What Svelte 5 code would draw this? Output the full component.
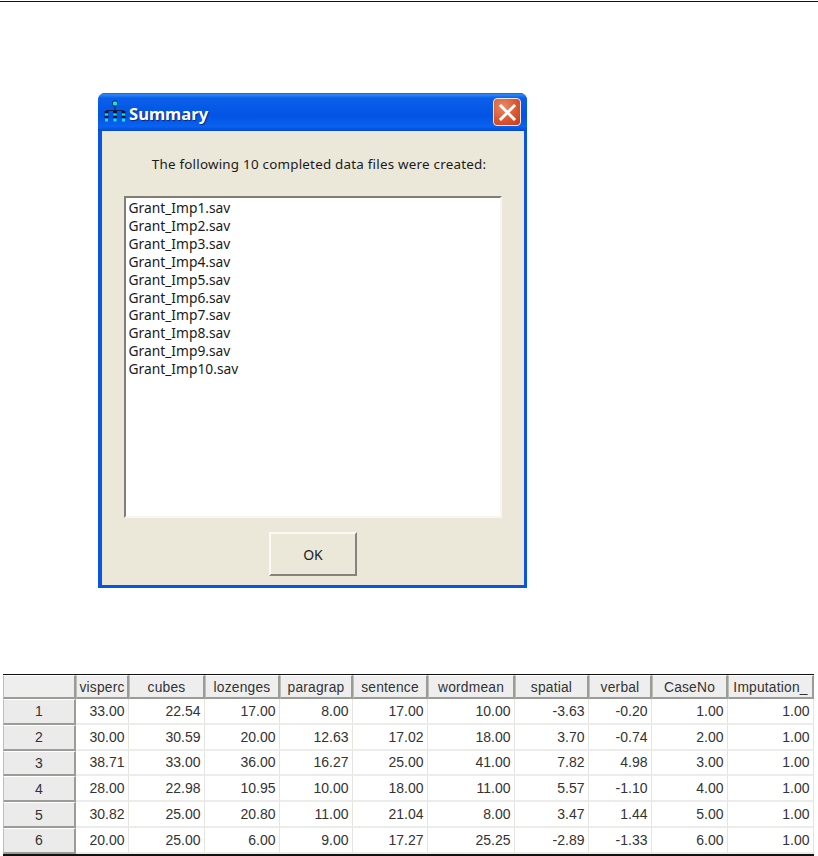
<script>
  const files = [1,2,3,4,5,6,7,8,9,10].map((n) => `Grant_Imp${n}.sav`);
  const columns = ['visperc','cubes','lozenges','paragrap','sentence','wordmean','spatial','verbal','CaseNo','Imputation_'];
  const rows = [
    ['33.00','22.54','17.00','8.00','17.00','10.00','-3.63','-0.20','1.00','1.00'],
    ['30.00','30.59','20.00','12.63','17.02','18.00','3.70','-0.74','2.00','1.00'],
    ['38.71','33.00','36.00','16.27','25.00','41.00','7.82','4.98','3.00','1.00'],
    ['28.00','22.98','10.95','10.00','18.00','11.00','5.57','-1.10','4.00','1.00'],
    ['30.82','25.00','20.80','11.00','21.04','8.00','3.47','1.44','5.00','1.00'],
    ['20.00','25.00','6.00','9.00','17.27','25.25','-2.89','-1.33','6.00','1.00']
  ];
</script>

<div class="page">
  <div class="rule"></div>

  <div class="dialog">
    <div class="titlebar">
      <svg class="appicon" width="24" height="22" viewBox="0 0 24 22">
        <path d="M3.5 10.5h17M3.5 10.5v10M12 6v14.5M20.5 10.5v10" stroke="#10204a" stroke-width="1" fill="none"/>
        <rect x="9.5" y="1" width="5" height="5" rx="1.5" fill="#19e0e0" stroke="#0a2a50"/>
        <path d="M1.5 11h4v2h-4zM10 11h4v2h-4zM18.5 11h4v2h-4z" fill="#08182e"/>
        <path d="M2 13.5h3v2h-3zM10.500 13.500h3v2h-3zM19 13.500h3v2h-3z" fill="#19e0e0"/>
        <path d="M1.500 16h4v2h-4zM10 16h4v2h-4zM18.500 16h4v2h-4z" fill="#08182e"/>
        <path d="M2 18.500h3v3h-3zM10.500 18.500h3v3h-3zM19 18.500h3v3h-3z" fill="#19e0e0"/>
      </svg>
      <span class="title">Summary</span>
      <button class="close" aria-label="Close">
        <svg width="25" height="25" viewBox="0 0 25 25">
          <path d="M6 6l13 13M19 6L6 19" stroke="#fff" stroke-width="3" stroke-linecap="square"/>
        </svg>
      </button>
    </div>
    <div class="body">
      <p class="message">The following 10 completed data files were created:</p>
      <div class="list">
        {#each files as f}
          <div>{f}</div>
        {/each}
      </div>
      <button class="ok">OK</button>
    </div>
  </div>

  <div class="grid">
    <div class="corner"></div>
    {#each columns as c}
      <div class="head">{c}</div>
    {/each}
    {#each rows as r, i}
      <div class="rowhead">{i + 1}</div>
      {#each r as v}
        <div class="cell">{v}</div>
      {/each}
    {/each}
  </div>
</div>

<style>
  :global(body) {
    margin: 0;
    background: #fff;
  }
  .page {
    width: 818px;
    height: 856px;
    overflow: hidden;
    padding-top: 1px;
    box-sizing: border-box;
    font-family: "Liberation Sans", Arial, sans-serif;
    color: #222;
  }
  .rule {
    height: 1px;
    background: #111;
  }
  .dialog {
    width: 429px;
    height: 495px;
    margin: 91px 0 0 98px;
    box-sizing: border-box;
    background: #0a55e0;
    border-radius: 7px 7px 0 0;
    display: flex;
    flex-direction: column;
  }
  .titlebar {
    height: 38px;
    flex: none;
    display: flex;
    align-items: center;
    padding: 0 4px 0 5px;
    border-radius: 7px 7px 0 0;
    background: linear-gradient(#0a5ae6 0, #2a86f6 4%, #0a5fe8 14%, #0354e4 60%, #0a62ee 88%, #0448d0 100%);
  }
  .appicon {
    flex: none;
    margin-top: -2px;
  }
  .title {
    margin-left: 2px;
    padding-top: 2px;
    color: #fff;
    font-family: "Noto Sans", "Liberation Sans", sans-serif;
    font-size: 16.6px;
    font-weight: 700;
    text-shadow: 1px 1px 1px #0a2a80;
  }
  .close {
    margin-left: auto;
    margin-right: 2px;
    width: 28px;
    height: 28px;
    padding: 0;
    display: flex;
    align-items: center;
    justify-content: center;
    background: radial-gradient(circle at 35% 30%, #e88a68, #d8532e 60%, #c23c1c);
    border: 1px solid #f0e8e0;
    border-radius: 4px;
  }
  .body {
    flex: 1;
    margin: 0 3px 3px 4px;
    background: #ebe8d9;
    display: flex;
    flex-direction: column;
    align-items: center;
    min-height: 0;
  }
  .message {
    margin: 25px 0 0 0;
    padding-left: 12px;
    font-family: "Noto Sans", "Liberation Sans", sans-serif;
    font-size: 13.4px;
    letter-spacing: 0.22px;
    line-height: 16px;
    color: #1a1a1a;
    height: 32px;
    white-space: nowrap;
  }
  .list {
    width: 378px;
    height: 322px;
    box-sizing: border-box;
    margin-top: 8px;
    margin-left: -1px;
    padding: 1px 3px 0;
    background: #fff;
    border: 2px solid;
    border-color: #817f74 #f8f6ee #f8f6ee #817f74;
    font-family: "Noto Sans", "Liberation Sans", sans-serif;
    font-size: 13.8px;
    line-height: 17.9px;
    color: #1a1a1a;
  }
  .ok {
    width: 88px;
    height: 44px;
    margin-top: 14px;
    padding: 0;
    box-sizing: border-box;
    background: #ebe8d9;
    border: 2px solid;
    border-color: #fbfaf3 #85837a #85837a #fbfaf3;
    font-family: "Noto Sans", "Liberation Sans", sans-serif;
    font-size: 14px;
    color: #222;
  }
  .grid {
    width: 811px;
    margin: 86px 0 0 3px;
    box-sizing: border-box;
    border-top: 1px solid #111;
    border-bottom: 2px solid #111;
    background: #fff;
    display: grid;
    grid-template-columns: 73px 53px 76px 75px 73px 75px 87px 74px 63px 76px 86px;
    grid-template-rows: 24px repeat(6, 25.8px);
    font-size: 13.8px;
    color: #333;
  }
  .corner, .head, .rowhead {
    background: #eeeeee;
    box-sizing: border-box;
    border-top: 1px solid #fff;
    border-left: 1px solid #bdbdb8;
    border-right: 2px solid #9c9c96;
    border-bottom: 2px solid #9c9c96;
  }
  .head {
    display: flex;
    align-items: center;
    justify-content: center;
    white-space: nowrap;
    overflow: hidden;
    letter-spacing: 0.2px;
    padding-top: 2px;
  }
  .rowhead {
    display: flex;
    align-items: center;
    justify-content: center;
    font-size: 14px;
    background: #ebebeb;
  }
  .cell {
    box-sizing: border-box;
    display: flex;
    align-items: center;
    justify-content: flex-end;
    padding-right: 3.5px;
    border-right: 1px solid #e4e4e0;
    border-bottom: 2px solid #ececea;
    font-size: 14px;
  }
</style>
